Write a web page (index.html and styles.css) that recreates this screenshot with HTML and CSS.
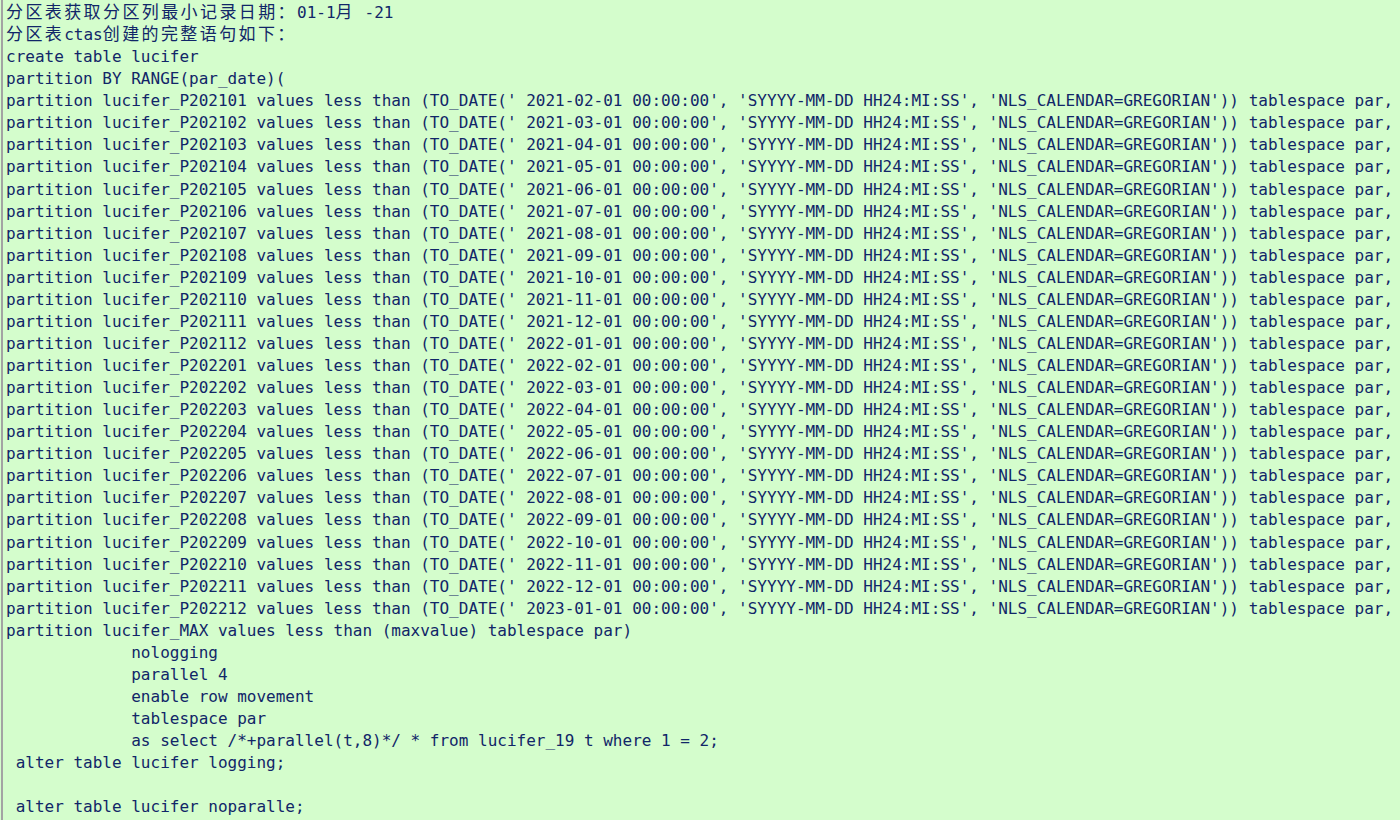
FILE: index.html
```html
<!DOCTYPE html>
<html lang="zh-CN">
<head>
<meta charset="utf-8">
<title>lucifer ctas</title>
<link rel="stylesheet" href="styles.css">
</head>
<body>
<div class="panel">
<pre class="code"><span class="cjk">分区表获取分区列最小记录日期：</span>01-1<span class="cjk">月</span> -21
<span class="cjk">分区表</span>ctas<span class="cjk">创建的完整语句如下：</span>
create table lucifer
partition BY RANGE(par_date)(
partition lucifer_P202101 values less than (TO_DATE(' 2021-02-01 00:00:00', 'SYYYY-MM-DD HH24:MI:SS', 'NLS_CALENDAR=GREGORIAN')) tablespace par,
partition lucifer_P202102 values less than (TO_DATE(' 2021-03-01 00:00:00', 'SYYYY-MM-DD HH24:MI:SS', 'NLS_CALENDAR=GREGORIAN')) tablespace par,
partition lucifer_P202103 values less than (TO_DATE(' 2021-04-01 00:00:00', 'SYYYY-MM-DD HH24:MI:SS', 'NLS_CALENDAR=GREGORIAN')) tablespace par,
partition lucifer_P202104 values less than (TO_DATE(' 2021-05-01 00:00:00', 'SYYYY-MM-DD HH24:MI:SS', 'NLS_CALENDAR=GREGORIAN')) tablespace par,
partition lucifer_P202105 values less than (TO_DATE(' 2021-06-01 00:00:00', 'SYYYY-MM-DD HH24:MI:SS', 'NLS_CALENDAR=GREGORIAN')) tablespace par,
partition lucifer_P202106 values less than (TO_DATE(' 2021-07-01 00:00:00', 'SYYYY-MM-DD HH24:MI:SS', 'NLS_CALENDAR=GREGORIAN')) tablespace par,
partition lucifer_P202107 values less than (TO_DATE(' 2021-08-01 00:00:00', 'SYYYY-MM-DD HH24:MI:SS', 'NLS_CALENDAR=GREGORIAN')) tablespace par,
partition lucifer_P202108 values less than (TO_DATE(' 2021-09-01 00:00:00', 'SYYYY-MM-DD HH24:MI:SS', 'NLS_CALENDAR=GREGORIAN')) tablespace par,
partition lucifer_P202109 values less than (TO_DATE(' 2021-10-01 00:00:00', 'SYYYY-MM-DD HH24:MI:SS', 'NLS_CALENDAR=GREGORIAN')) tablespace par,
partition lucifer_P202110 values less than (TO_DATE(' 2021-11-01 00:00:00', 'SYYYY-MM-DD HH24:MI:SS', 'NLS_CALENDAR=GREGORIAN')) tablespace par,
partition lucifer_P202111 values less than (TO_DATE(' 2021-12-01 00:00:00', 'SYYYY-MM-DD HH24:MI:SS', 'NLS_CALENDAR=GREGORIAN')) tablespace par,
partition lucifer_P202112 values less than (TO_DATE(' 2022-01-01 00:00:00', 'SYYYY-MM-DD HH24:MI:SS', 'NLS_CALENDAR=GREGORIAN')) tablespace par,
partition lucifer_P202201 values less than (TO_DATE(' 2022-02-01 00:00:00', 'SYYYY-MM-DD HH24:MI:SS', 'NLS_CALENDAR=GREGORIAN')) tablespace par,
partition lucifer_P202202 values less than (TO_DATE(' 2022-03-01 00:00:00', 'SYYYY-MM-DD HH24:MI:SS', 'NLS_CALENDAR=GREGORIAN')) tablespace par,
partition lucifer_P202203 values less than (TO_DATE(' 2022-04-01 00:00:00', 'SYYYY-MM-DD HH24:MI:SS', 'NLS_CALENDAR=GREGORIAN')) tablespace par,
partition lucifer_P202204 values less than (TO_DATE(' 2022-05-01 00:00:00', 'SYYYY-MM-DD HH24:MI:SS', 'NLS_CALENDAR=GREGORIAN')) tablespace par,
partition lucifer_P202205 values less than (TO_DATE(' 2022-06-01 00:00:00', 'SYYYY-MM-DD HH24:MI:SS', 'NLS_CALENDAR=GREGORIAN')) tablespace par,
partition lucifer_P202206 values less than (TO_DATE(' 2022-07-01 00:00:00', 'SYYYY-MM-DD HH24:MI:SS', 'NLS_CALENDAR=GREGORIAN')) tablespace par,
partition lucifer_P202207 values less than (TO_DATE(' 2022-08-01 00:00:00', 'SYYYY-MM-DD HH24:MI:SS', 'NLS_CALENDAR=GREGORIAN')) tablespace par,
partition lucifer_P202208 values less than (TO_DATE(' 2022-09-01 00:00:00', 'SYYYY-MM-DD HH24:MI:SS', 'NLS_CALENDAR=GREGORIAN')) tablespace par,
partition lucifer_P202209 values less than (TO_DATE(' 2022-10-01 00:00:00', 'SYYYY-MM-DD HH24:MI:SS', 'NLS_CALENDAR=GREGORIAN')) tablespace par,
partition lucifer_P202210 values less than (TO_DATE(' 2022-11-01 00:00:00', 'SYYYY-MM-DD HH24:MI:SS', 'NLS_CALENDAR=GREGORIAN')) tablespace par,
partition lucifer_P202211 values less than (TO_DATE(' 2022-12-01 00:00:00', 'SYYYY-MM-DD HH24:MI:SS', 'NLS_CALENDAR=GREGORIAN')) tablespace par,
partition lucifer_P202212 values less than (TO_DATE(' 2023-01-01 00:00:00', 'SYYYY-MM-DD HH24:MI:SS', 'NLS_CALENDAR=GREGORIAN')) tablespace par,
partition lucifer_MAX values less than (maxvalue) tablespace par)
             nologging
             parallel 4
             enable row movement
             tablespace par
             as select /*+parallel(t,8)*/ * from lucifer_19 t where 1 = 2;
 alter table lucifer logging;

 alter table lucifer noparalle;
</pre>
</div>
</body>
</html>
```
FILE: styles.css
```css
html, body {
  margin: 0;
  padding: 0;
  background: #d4fdcc;
  height: 100%;
  overflow: hidden;
}

.panel {
  margin-left: 1px;
  border-left: 2px solid #a3a3a3;
  min-height: 100%;
  box-sizing: border-box;
  padding: 2px 0 0 3px;
}

.code {
  margin: 0;
  font-family: "DejaVu Sans Mono", "Liberation Mono", "Noto Sans CJK SC", monospace;
  font-size: 16px;
  line-height: 22.07px;
  color: #112668;
  white-space: pre;
}

.cjk {
  font-family: "Noto Sans CJK SC", sans-serif;
  font-size: 17px;
  letter-spacing: 2.4px;
  line-height: 1;
}
```
